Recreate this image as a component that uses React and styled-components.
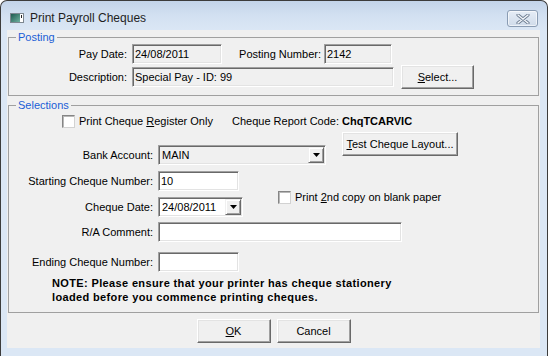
import React from 'react';
import styled, { createGlobalStyle } from 'styled-components';

const GlobalStyle = createGlobalStyle`
  html, body { margin: 0; padding: 0; background: #fff; }
  body { font-family: 'Liberation Sans', Arial, sans-serif; font-size: 11px; color: #000; }
  * { box-sizing: border-box; }
`;

const Window = styled.div`
  width: 548px;
  height: 356px;
  display: flex;
  flex-direction: column;
  background: linear-gradient(to bottom, #c3d4ea 0, #d2e0f1 14px, #dbe7f5 30px, #dbe7f5 100%);
  border: 1px solid #3c3c3c;
  border-bottom: none;
  border-radius: 7px 7px 0 0;
  padding: 0 7px 8px 6px;
  overflow: hidden;
`;

const TitleBar = styled.div`
  height: 29px;
  flex: none;
  display: flex;
  align-items: flex-start;
  padding: 0 2px 0 3px;
`;

const TitleIcon = styled.svg`
  margin-top: 12px;
  flex: none;
`;

const TitleText = styled.div`
  margin: 9px 0 0 6px;
  font-size: 12px;
  line-height: 16px;
  color: #1e1e1e;
`;

const CloseButton = styled.div`
  margin: 9px 0 0 auto;
  width: 31px;
  height: 17px;
  border: 1px solid #8a9cb3;
  border-radius: 3px;
  background: linear-gradient(to bottom, #e6edf6, #cfdbea);
  box-shadow: inset 0 0 0 1px rgba(255, 255, 255, 0.6);
  display: flex;
  align-items: center;
  justify-content: center;
`;

const Client = styled.div`
  flex: 1;
  background: #f0f0f0;
  display: flex;
  flex-direction: column;
  padding: 0 1px;
`;

const Group = styled.fieldset`
  margin: ${(p) => p.$mt}px 0 0;
  padding: 0 0 ${(p) => p.$pb}px 0;
  border: 1px solid #a0a0a0;
  min-width: 0;
`;

const Legend = styled.legend`
  margin-left: 7px;
  padding: 0 2px;
  color: #1a5ed6;
  font-size: 11px;
  line-height: 13px;
`;

const Row = styled.div`
  display: flex;
  align-items: center;
  height: ${(p) => p.$h || 20}px;
  margin-top: ${(p) => p.$mt || 0}px;
  align-self: ${(p) => (p.$end ? 'flex-end' : 'auto')};
  flex: none;
`;

const Label = styled.span`
  flex: none;
  width: ${(p) => p.$w}px;
  text-align: right;
  margin-right: ${(p) => (p.$mr === undefined ? 5 : p.$mr)}px;
  white-space: nowrap;
`;

const TextBox = styled.input`
  flex: none;
  width: ${(p) => p.$w}px;
  height: 20px;
  margin: 0;
  padding: 0 2px;
  font-family: 'Liberation Sans', Arial, sans-serif;
  font-size: 11px;
  color: #000;
  background: ${(p) => (p.$grey ? '#f0f0f0' : '#fff')};
  border: 1px solid;
  border-color: #a0a0a0 #fff #fff #a0a0a0;
  box-shadow: inset 1px 1px 0 #696969, inset -1px -1px 0 #e3e3e3;
  outline: none;
`;

const Combo = styled.div`
  flex: none;
  width: ${(p) => p.$w}px;
  height: 20px;
  display: flex;
  align-items: center;
  padding: 2px 1px 2px 2px;
  background: ${(p) => (p.$grey ? '#f0f0f0' : '#fff')};
  border: 1px solid;
  border-color: #a0a0a0 #fff #fff #a0a0a0;
  box-shadow: inset 1px 1px 0 #696969, inset -1px -1px 0 #e3e3e3;
`;

const ComboText = styled.span`
  flex: 1;
  padding-left: 1px;
`;

const DropButton = styled.span`
  flex: none;
  width: 16px;
  height: 16px;
  background: #f0f0f0;
  border: 1px solid;
  border-color: #f0f0f0 #696969 #696969 #f0f0f0;
  box-shadow: inset 1px 1px 0 #fff, inset -1px -1px 0 #a0a0a0;
  display: flex;
  align-items: center;
  justify-content: center;
`;

const Button = styled.button`
  flex: none;
  width: ${(p) => p.$w}px;
  height: ${(p) => p.$h || 24}px;
  margin: ${(p) => p.$m || '0'};
  padding: 0;
  font-family: 'Liberation Sans', Arial, sans-serif;
  font-size: 11px;
  color: #000;
  background: #f0f0f0;
  border: 1px solid;
  border-color: #fff #696969 #696969 #fff;
  box-shadow: inset -1px -1px 0 #a0a0a0, inset 1px 1px 0 #e3e3e3;
  align-self: flex-start;
`;

const CheckLabel = styled.label`
  display: flex;
  align-items: center;
  gap: 4px;
  height: 18px;
  padding-left: ${(p) => p.$pl || 0}px;
  margin: ${(p) => p.$m || '0'};
  white-space: nowrap;
`;

const CheckBox = styled.span`
  width: 13px;
  height: 13px;
  flex: none;
  background: #fff;
  border: 1px solid;
  border-color: #858585 #d2d2d2 #d2d2d2 #858585;
  box-shadow: inset 1px 1px 0 #b8b8b8;
`;

const TopRow = styled.div`
  display: grid;
  grid-template-columns: 223px 105px auto;
  align-items: center;
  height: 18px;
`;

const CodeLabel = styled.span`
  text-align: right;
  white-space: nowrap;
`;

const CodeValue = styled.span`
  font-weight: bold;
  margin-left: 5px;
`;

const Block = styled.div`
  display: flex;
  align-items: flex-start;
  height: ${(p) => (p.$h ? `${p.$h}px` : 'auto')};
  margin-top: ${(p) => p.$mt || 0}px;
`;

const Column = styled.div`
  display: flex;
  flex-direction: column;
  gap: 6px;
`;

const Note = styled.div`
  margin-top: 4px;
  padding-left: 43px;
  font-weight: bold;
  line-height: 14px;
  letter-spacing: 0.36px;
`;

const ButtonBar = styled.div`
  display: flex;
  justify-content: center;
  gap: 6px;
  margin-top: 6px;
`;

const Arrow = () => (
  <svg width="7" height="4" viewBox="0 0 7 4">
    <polygon points="0,0 7,0 3.5,4" fill="#000" />
  </svg>
);

export default function App() {
  return (
    <>
      <GlobalStyle />
      <Window>
        <TitleBar>
          <TitleIcon width="14" height="10" viewBox="0 0 14 10">
            <defs>
              <linearGradient id="ic" x1="0" y1="0" x2="1" y2="1">
                <stop offset="0" stopColor="#1f5a50" />
                <stop offset="1" stopColor="#6fb2a0" />
              </linearGradient>
            </defs>
            <rect x="0.5" y="0.5" width="13" height="9" fill="#fff" stroke="#7d8790" />
            <rect x="1" y="1" width="9" height="8" fill="url(#ic)" />
            <rect x="11" y="2" width="1" height="3" fill="#222" />
          </TitleIcon>
          <TitleText>Print Payroll Cheques</TitleText>
          <CloseButton>
            <svg width="14" height="10" viewBox="0 0 14 10">
              <path d="M2 1 L12 9 M12 1 L2 9" stroke="#6f7f93" strokeWidth="3.2" strokeLinecap="round" />
              <path d="M2 1 L12 9 M12 1 L2 9" stroke="#f4f7fb" strokeWidth="1.4" strokeLinecap="round" />
            </svg>
          </CloseButton>
        </TitleBar>
        <Client>
          <Group $mt={1} $pb={6}>
            <Legend>Posting</Legend>
            <Row $h={20}>
              <Label $w={118}>Pay Date:</Label>
              <TextBox $w={90} $grey readOnly defaultValue="24/08/2011" />
              <Label $w={99} $mr={3}>Posting Number:</Label>
              <TextBox $w={68} $grey readOnly defaultValue="2142" />
            </Row>
            <Row $h={24} $mt={1}>
              <Label $w={118}>Description:</Label>
              <TextBox $w={262} $grey readOnly defaultValue="Special Pay - ID: 99" />
              <Button $w={73} $m="0 0 0 7px">
                <u>S</u>elect...
              </Button>
            </Row>
          </Group>
          <Group $mt={3} $pb={8}>
            <Legend>Selections</Legend>
            <TopRow>
              <CheckLabel $pl={53}>
                <CheckBox />
                <span>
                  Print Cheque <u>R</u>egister Only
                </span>
              </CheckLabel>
              <CodeLabel>Cheque Report Code:</CodeLabel>
              <CodeValue>ChqTCARVIC</CodeValue>
            </TopRow>
            <Block $h={35}>
              <Row $end>
                <Label $w={144}>Bank Account:</Label>
                <Combo $w={168} $grey>
                  <ComboText>MAIN</ComboText>
                  <DropButton>
                    <Arrow />
                  </DropButton>
                </Combo>
              </Row>
              <Button $w={116} $m="2px 0 0 16px">
                <u>T</u>est Cheque Layout...
              </Button>
            </Block>
            <Block $mt={6}>
              <Column>
                <Row>
                  <Label $w={144}>Starting Cheque Number:</Label>
                  <TextBox $w={81} defaultValue="10" />
                </Row>
                <Row>
                  <Label $w={144}>Cheque Date:</Label>
                  <Combo $w={85}>
                    <ComboText>24/08/2011</ComboText>
                    <DropButton>
                      <Arrow />
                    </DropButton>
                  </Combo>
                </Row>
              </Column>
              <CheckLabel $m="17px 0 0 35px">
                <CheckBox />
                <span>
                  Print <u>2</u>nd copy on blank paper
                </span>
              </CheckLabel>
            </Block>
            <Row $mt={5}>
              <Label $w={144}>R/A Comment:</Label>
              <TextBox $w={244} defaultValue="" />
            </Row>
            <Row $mt={10}>
              <Label $w={144}>Ending Cheque Number:</Label>
              <TextBox $w={81} defaultValue="" />
            </Row>
            <Note>
              NOTE: Please ensure that your printer has cheque stationery
              <br />
              loaded before you commence printing cheques.
            </Note>
          </Group>
          <ButtonBar>
            <Button $w={74}>
              <u>O</u>K
            </Button>
            <Button $w={74}>Cancel</Button>
          </ButtonBar>
        </Client>
      </Window>
    </>
  );
}
